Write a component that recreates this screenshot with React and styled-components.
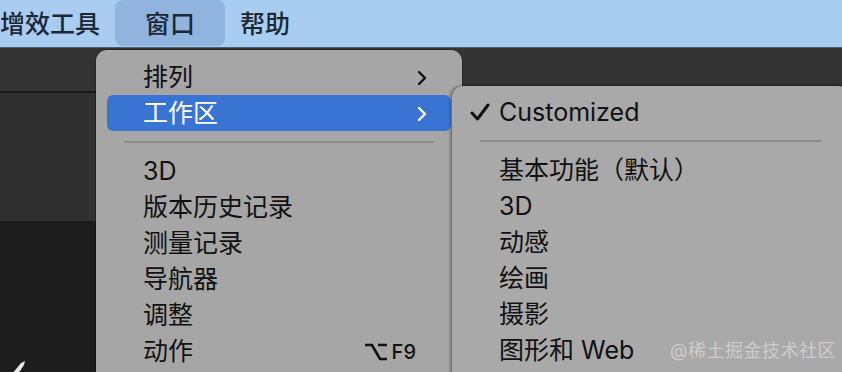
import styled, { createGlobalStyle } from "styled-components";

const GlobalStyle = createGlobalStyle`
  html, body {
    margin: 0;
    padding: 0;
    background: #1c1c1c;
    overflow: hidden;
  }
  * { box-sizing: border-box; }
`;

const FONT = `Inter, "Noto Sans CJK SC", "Noto Sans", sans-serif`;

const windowMenu = [
  { label: "排列", sub: true },
  { label: "工作区", sub: true, active: true },
  { sep: true },
  { label: "3D" },
  { label: "版本历史记录" },
  { label: "测量记录" },
  { label: "导航器" },
  { label: "调整" },
  { label: "动作", shortcut: "F9" },
];

const workspaceMenu = [
  { label: "Customized", checked: true },
  { sep: true },
  { label: "基本功能（默认）" },
  { label: "3D" },
  { label: "动感" },
  { label: "绘画" },
  { label: "摄影" },
  { label: "图形和 Web" },
];

const Chevron = ({ light }) => (
  <svg width="10" height="16" viewBox="0 0 10 16">
    <path
      d="M2 2 L8 8 L2 14"
      fill="none"
      stroke={light ? "#fff" : "#111"}
      strokeWidth="2.4"
      strokeLinecap="round"
      strokeLinejoin="round"
    />
  </svg>
);

const Check = () => (
  <svg width="20" height="18" viewBox="0 0 20 18">
    <path
      d="M2 10 L7.5 16 L18 2"
      fill="none"
      stroke="#111"
      strokeWidth="3"
      strokeLinecap="round"
      strokeLinejoin="round"
    />
  </svg>
);

const OptionKey = () => (
  <svg width="22" height="18" viewBox="0 0 22 18">
    <path d="M0 2 H7 L15 16 H22 M13 2 H22" fill="none" stroke="#111" strokeWidth="2.6" />
  </svg>
);

const App = () => {
  return (
    <>
      <GlobalStyle />
      <Screen>
        <MenuBar>
          <MenuTitle>增效工具</MenuTitle>
          <MenuTitle $active>窗口</MenuTitle>
          <MenuTitle>帮助</MenuTitle>
        </MenuBar>
        <Toolbar />
        <Panel />
        <Canvas>
          <Cursor viewBox="0 0 16 14" width="16" height="14">
            <path d="M2 14 L11 3 L15 1 L14 5 L8 14 Z" fill="#e8e8e8" />
          </Cursor>
        </Canvas>

        <Dropdown $left={96} $top={50} $width={366} $pad={9}>
          {windowMenu.map((item, i) =>
            item.sep ? (
              <Separator key={i} />
            ) : (
              <Item key={i} $active={item.active}>
                <Label>{item.label}</Label>
                {item.sub && <Chevron light={item.active} />}
                {item.shortcut && (
                  <Shortcut>
                    <OptionKey />
                    <span>{item.shortcut}</span>
                  </Shortcut>
                )}
              </Item>
            )
          )}
        </Dropdown>

        <Dropdown $left={452} $top={86} $width={398} $pad={8} $sub>
          {workspaceMenu.map((item, i) =>
            item.sep ? (
              <Separator key={i} />
            ) : (
              <Item key={i}>
                {item.checked && (
                  <CheckSlot>
                    <Check />
                  </CheckSlot>
                )}
                <Label>{item.label}</Label>
              </Item>
            )
          )}
        </Dropdown>

        <Watermark>@稀土掘金技术社区</Watermark>
      </Screen>
    </>
  );
};

export default App;

const Screen = styled.div`
  position: relative;
  width: 842px;
  height: 372px;
  overflow: hidden;
  display: flex;
  flex-direction: column;
  font-family: ${FONT};
`;

const MenuBar = styled.div`
  height: 48px;
  flex-shrink: 0;
  display: flex;
  align-items: stretch;
  margin-left: -15px;
  background: #a9ccf1;
  border-bottom: 1px solid #4d5f74;
`;

const MenuTitle = styled.div`
  display: flex;
  align-items: center;
  padding: 0 ${(p) => (p.$active ? 30 : 15)}px 3px;
  font-size: 25px;
  font-weight: 500;
  color: #1c2835;
  background: ${(p) => (p.$active ? "#90b4dd" : "transparent")};
  border-radius: ${(p) => (p.$active ? "8px" : "0")};
  margin-bottom: 1px;
`;

const Toolbar = styled.div`
  height: 45px;
  flex-shrink: 0;
  background: #333333;
  border-bottom: 2px solid #1a1a1a;
`;

const Panel = styled.div`
  height: 128px;
  flex-shrink: 0;
  background: #303030;
`;

const Canvas = styled.div`
  flex: 1;
  position: relative;
  background: #1c1c1c;
`;

const Cursor = styled.svg`
  position: absolute;
  left: 10px;
  bottom: -2px;
`;

const Dropdown = styled.div`
  position: absolute;
  left: ${(p) => p.$left}px;
  top: ${(p) => p.$top}px;
  width: ${(p) => p.$width}px;
  height: 420px;
  padding: ${(p) => p.$pad}px 11px 0;
  background: ${(p) => (p.$sub ? "#a9a9a9" : "#a6a6a6")};
  border-radius: 11px;
  box-shadow: ${(p) =>
    p.$sub
      ? "-2px 0 3px rgba(0,0,0,0.28), 0 0 0 1px rgba(0,0,0,0.12)"
      : "0 0 0 1px rgba(0,0,0,0.25)"};
`;

const Item = styled.div`
  position: relative;
  height: 36px;
  display: flex;
  align-items: center;
  padding: 1px 24px 0 36px;
  border-radius: 6px;
  font-size: 25px;
  font-weight: 400;
  color: ${(p) => (p.$active ? "#ffffff" : "#111111")};
  background: ${(p) => (p.$active ? "#3a74d3" : "transparent")};
`;

const Label = styled.span`
  flex: 1;
  line-height: 1;
  white-space: nowrap;
`;

const CheckSlot = styled.span`
  position: absolute;
  left: 7px;
  top: 9px;
  display: flex;
`;

const Shortcut = styled.span`
  display: flex;
  align-items: center;
  gap: 5px;
  margin-right: 11px;
  font-size: 20px;
  font-weight: 500;
`;

const Separator = styled.div`
  height: 22px;
  margin: 0 17px;
  display: flex;
  align-items: center;
  &::after {
    content: "";
    flex: 1;
    height: 2px;
    background: #8c8c8c;
  }
`;

const Watermark = styled.div`
  position: absolute;
  left: 670px;
  top: 336px;
  font-size: 18px;
  font-weight: 400;
  color: rgba(235, 235, 235, 0.55);
  white-space: nowrap;
  letter-spacing: 0.5px;
`;
